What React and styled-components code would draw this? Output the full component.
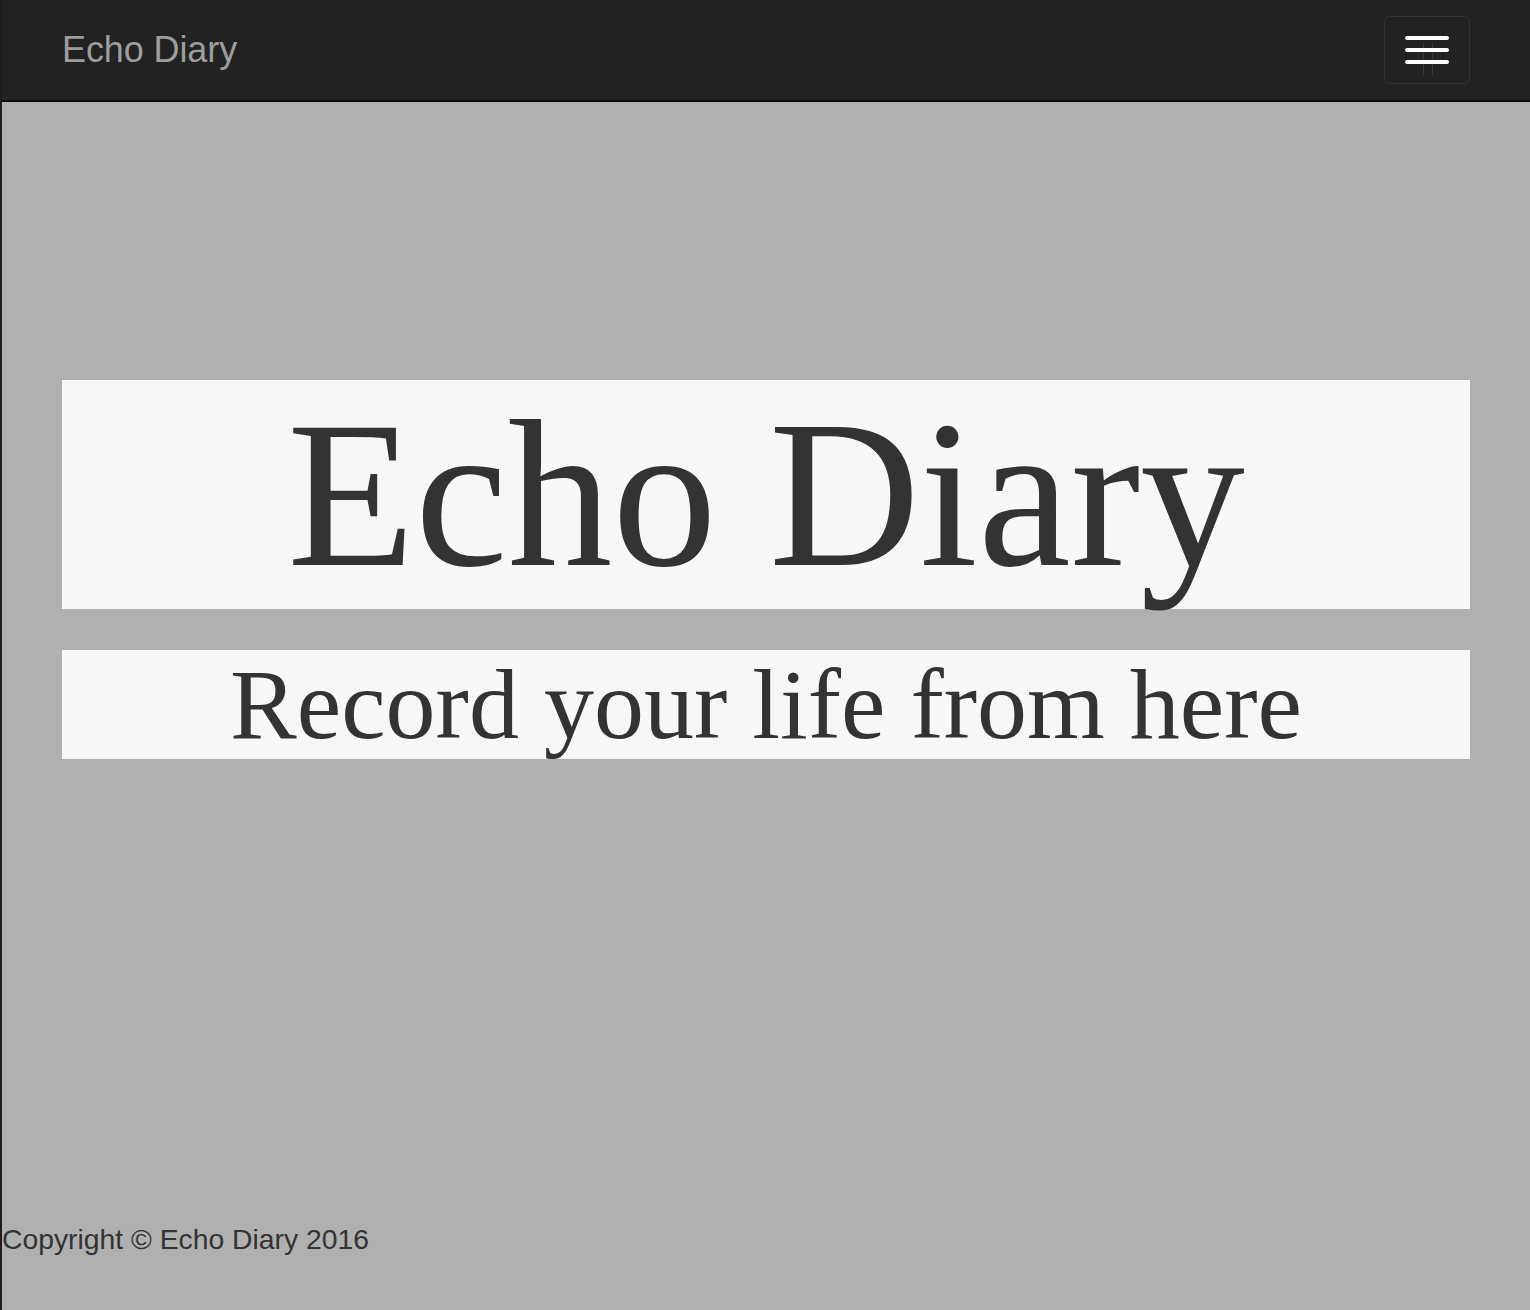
import React from "react";
import styled, { createGlobalStyle } from "styled-components";
//

const GlobalStyle = createGlobalStyle`
  html, body {
    margin: 0;
    padding: 0;
    background: #b0b0b0;
  }
  * {
    box-sizing: border-box;
  }
`;

const Page = styled.div`
  min-height: 100vh;
  display: flex;
  flex-direction: column;
  border-left: 2px solid #1e1b20;
  background: #b0b0b0;
`;

const Navbar = styled.nav`
  height: 102px;
  display: flex;
  align-items: center;
  justify-content: space-between;
  padding: 0 60px;
  background: #222;
  border-bottom: 2px solid #080808;
`;

const Brand = styled.a`
  font-family: "Liberation Sans", Arial, sans-serif;
  font-size: 36px;
  color: #9d9d9d;
  text-decoration: none;
  letter-spacing: -0.1px;
`;

const Toggle = styled.button`
  position: relative;
  display: flex;
  flex-direction: column;
  gap: 8px;
  padding: 19px 20px;
  background: transparent;
  border: 1px solid #333;
  border-radius: 6px;
  cursor: pointer;

  &::after {
    content: "";
    position: absolute;
    left: 38px;
    top: 26px;
    width: 8px;
    height: 32px;
    border-left: 1px solid #3c3c3c;
    border-right: 1px solid #3c3c3c;
  }
`;

const Bar = styled.span`
  display: block;
  width: 44px;
  height: 4px;
  border-radius: 2px;
  background: #fff;
  position: relative;
  z-index: 1;
`;

const Header = styled.header`
  flex: 1;
  display: flex;
  flex-direction: column;
  gap: 41px;
  padding: 278px 60px 0;
`;

const Heading = styled.h1`
  margin: 0;
  background: #f7f7f7;
  color: #333;
  text-align: center;
  font-family: "Liberation Serif", "Times New Roman", serif;
  font-weight: normal;
  font-size: ${(p) => p.size}px;
  line-height: ${(p) => p.lh}px;
`;

const Footer = styled.footer`
  padding-bottom: 55px;
  font-family: "Liberation Sans", Arial, sans-serif;
  font-size: 28.3px;
  line-height: 32px;
  color: #333;
`;

export default function App() {
  return (
    <Page>
      <GlobalStyle />
      <Navbar>
        <Brand href="#">Echo Diary</Brand>
        <Toggle aria-label="Toggle navigation">
          <Bar />
          <Bar />
          <Bar />
        </Toggle>
      </Navbar>
      <Header>
        <Heading size={209} lh={229}>
          Echo Diary
        </Heading>
        <Heading as="h2" size={100} lh={109}>
          Record your life from here
        </Heading>
      </Header>
      <Footer>Copyright © Echo Diary 2016</Footer>
    </Page>
  );
}
